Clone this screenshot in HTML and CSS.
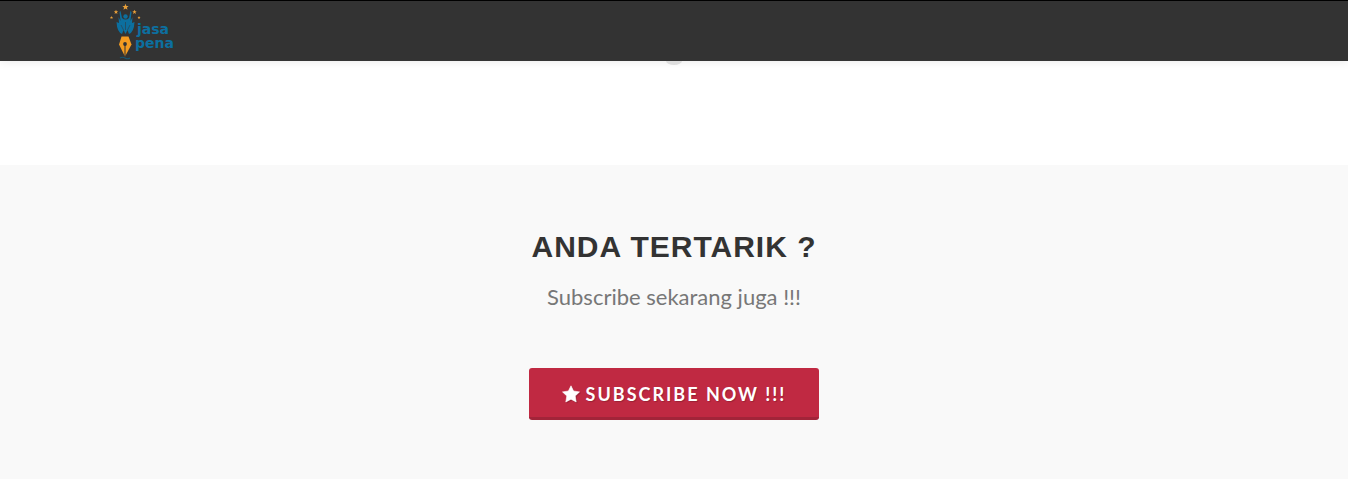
FILE: index.html
```html
<!DOCTYPE html>
<html lang="id">
<head>
<meta charset="utf-8">
<meta name="viewport" content="width=device-width, initial-scale=1">
<title>Jasa Pena</title>
<link rel="stylesheet" href="styles.css">
</head>
<body>
<header class="header">
  <div class="container">
    <a class="logo" href="#" aria-label="Jasa Pena">
      <svg class="logo-mark" viewBox="0 0 70 60" width="70" height="60" aria-hidden="true">
        <defs>
          <path id="star" d="M0-3.2 .9-1 3.1-.9 1.4.5 2 2.8 0 1.5-2 2.8-1.4.5-3.1-.9-.9-1Z"/>
        </defs>
        <g fill="#e9a03a">
          <use href="#star" transform="translate(16.500 6)"/>
          <use href="#star" transform="translate(7 11) scale(.7)"/>
          <use href="#star" transform="translate(25.500 11) scale(.7)"/>
          <use href="#star" transform="translate(2.500 16.500) scale(.5)"/>
          <use href="#star" transform="translate(30 16.500) scale(.5)"/>
        </g>
        <g fill="#0c6f9f">
          <circle cx="16.500" cy="15.500" r="2.200"/>
          <path d="M11.500 10 L13 17 Q16.500 20 20 17 L21.500 10 L22.500 11 L21.500 20 L23.500 16 L23 22 L25.500 21 Q25 31 20 33 L18.500 29 L16.500 33 L14.500 29 L13 33 Q8 31 7.500 21 L10 22 L9.500 16 L11.500 20 L10.500 11Z"/>
        </g>
        <path d="M12 24 14.500 29M21 24 18.500 29M16.500 21V29" fill="none" stroke="#28495a" stroke-width=".8"/>
        <path d="M12.500 35.500H19.500L22.500 43.500 16 55.500 10 43.500Z" fill="#f49b20"/>
        <circle cx="16" cy="43" r="1.900" fill="#333"/>
        <path d="M16 44V55" stroke="#333" stroke-width="1"/>
        <path d="M11 57Q13.500 55.500 16 57T21 57" fill="none" stroke="#195672" stroke-width="1.200"/>
        <g class="logo-text">
          <text x="28" y="33">jasa</text>
          <text x="26" y="47">pena</text>
        </g>
      </svg>
    </a>
  </div>
</header>
<main>
  <div class="spacer"><span class="dot"></span></div>
  <section class="promo">
    <h1 class="promo-title">Anda Tertarik ?</h1>
    <p class="promo-lead">Subscribe sekarang juga !!!</p>
    <button class="button" type="button">
      <svg class="button-icon" viewBox="0 0 18 18" width="18" height="18" aria-hidden="true"><path d="M9 .8 11.600 6 17.500 6.900 13.200 11 14.200 17 9 14.200 3.800 17 4.800 11 .5 6.900 6.400 6Z" fill="currentColor" stroke="currentColor" stroke-width=".6" stroke-linejoin="round"/></svg>
      <span>Subscribe Now !!!</span>
    </button>
  </section>
</main>
</body>
</html>
```
FILE: styles.css
```css
* {
  box-sizing: border-box;
}

body {
  margin: 0;
  background: #fff;
  color: #555;
  font-family: Lato, "Liberation Sans", sans-serif;
}

.header {
  border-top: 1px solid #000;
  background: #333;
  box-shadow: 0 0 10px rgba(0, 0, 0, 0.1);
}

.container {
  max-width: 1140px;
  margin: 0 auto;
  padding: 0 5px;
}

.logo,
.logo-mark {
  display: block;
  width: 70px;
}

.logo-text {
  fill: #0c6f9f;
  font: 700 14px "DejaVu Sans", sans-serif;
}

.spacer {
  display: flex;
  justify-content: center;
  height: 104px;
}

.dot {
  width: 16px;
  height: 4px;
  border-radius: 0 0 8px 8px / 0 0 4px 4px;
  background: #ddd;
}

.promo {
  display: flex;
  flex-direction: column;
  align-items: center;
  min-height: calc(100vh - 165px);
  padding: 60px 20px;
  background: #f9f9f9;
  text-align: center;
}

.promo-title {
  margin: 0;
  color: #333;
  font: 700 30px/44px "Liberation Sans", Arial, sans-serif;
  letter-spacing: 1px;
  text-transform: uppercase;
}

.promo-lead {
  margin: 10px 0 0;
  color: #777;
  font-size: 22px;
  line-height: 36px;
}

.button {
  display: flex;
  align-items: center;
  gap: 6px;
  height: 52px;
  margin: 53px 0 0;
  padding: 2px 33px 0;
  border: 0;
  border-bottom: 3px solid #a22439;
  border-radius: 3px;
  background: #c02942;
  color: #fff;
  font: 700 18px/46px Lato, sans-serif;
  letter-spacing: 2px;
  text-shadow: 1px 1px 1px rgba(0, 0, 0, 0.2);
  text-transform: uppercase;
  cursor: pointer;
}

.button-icon {
  filter: drop-shadow(1px 1px 0 rgba(0, 0, 0, 0.2));
}
```
